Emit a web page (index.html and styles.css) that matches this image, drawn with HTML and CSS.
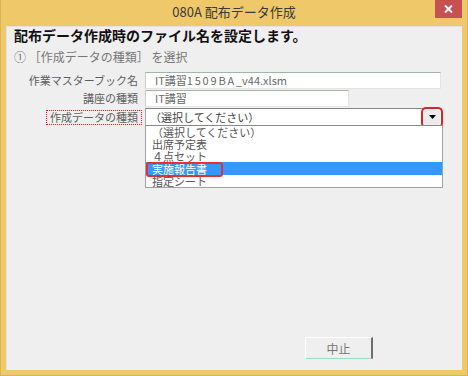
FILE: index.html
```html
<!DOCTYPE html>
<html lang="ja">
<head>
    <meta charset="UTF-8">
    <meta name="viewport" content="width=device-width, initial-scale=1.0">
    <title>080A 配布データ作成</title>
    <link rel="stylesheet" href="styles.css">
</head>
<body>
    <div class="window">
        <div class="titlebar">
            <span class="title">080A 配布データ作成</span>
            <button class="close" aria-label="閉じる">
                <svg width="9" height="8" viewBox="0 0 9 8"><path d="M1 0.5L8 7.5M8 0.5L1 7.5" stroke="#fff" stroke-width="2"/></svg>
            </button>
        </div>
        <div class="client">
            <h1 class="heading">配布データ作成時のファイル名を設定します。</h1>
            <p class="step">① ［作成データの種類］ を選択</p>
            <div class="form">
                <label class="label">作業マスターブック名</label>
                <div class="field field-wide">IT講習<span class="wide">1509BA</span>_v44.xlsm</div>

                <label class="label">講座の種類</label>
                <div class="field field-short">IT講習</div>

                <label class="label"><span class="marked">作成データの種類</span></label>
                <div class="combo">
                    <span class="combo-text">（選択してください）</span>
                    <span class="combo-btn">
                        <svg width="7" height="4" viewBox="0 0 7 4"><polygon points="0,0 7,0 3.5,4" fill="#000"/></svg>
                    </span>
                    <ul class="list">
                        <li>（選択してください）</li>
                        <li>出席予定表</li>
                        <li>４点セット</li>
                        <li class="selected"><span class="pick">実施報告書</span></li>
                        <li>指定シート</li>
                    </ul>
                </div>
            </div>
            <div class="footer">
                <button class="btn">中止</button>
            </div>
        </div>
    </div>
</body>
</html>
```

FILE: styles.css
```css
* {
    margin: 0;
    padding: 0;
    box-sizing: border-box;
}

body {
    width: 468px;
    height: 376px;
    font-family: "Noto Sans CJK JP", "Noto Sans", sans-serif;
    color: #333;
    overflow: hidden;
}

.window {
    width: 468px;
    height: 376px;
    background: #efc86a;
    border: 1px solid #dcb458;
    border-top: none;
    padding: 0 5px 5px 5px;
    display: flex;
    flex-direction: column;
}

.titlebar {
    height: 26px;
    position: relative;
    display: flex;
    justify-content: center;
    align-items: center;
    padding-bottom: 2px;
}

.title {
    font-size: 13px;
    line-height: 16px;
    color: #3a3a3a;
}

.close {
    position: absolute;
    top: 0;
    right: 0;
    width: 27px;
    height: 18px;
    background: #c75050;
    border: none;
    display: flex;
    justify-content: center;
    align-items: center;
}

.client {
    flex: 1;
    background: #efefef;
    border-left: 1px solid #e2e2e2;
    border-top: 1px solid #e2e2e2;
    display: flex;
    flex-direction: column;
}

.heading {
    font-size: 14px;
    font-weight: bold;
    line-height: 16px;
    color: #111;
    padding-left: 7px;
}

.step {
    font-size: 12px;
    line-height: 16px;
    color: #777;
    padding-left: 7px;
    margin-top: 6px;
}

.form {
    display: grid;
    grid-template-columns: 131px 297px;
    grid-template-rows: 17px 17px 18px;
    column-gap: 7px;
    row-gap: 1px;
    margin-top: 7px;
}

.label {
    justify-self: end;
    align-self: center;
    font-size: 11px;
    line-height: 13px;
    color: #5e5e5e;
}

.marked {
    display: inline-block;
    border: 1px dotted #e02020;
    padding: 0 3px;
    margin-right: -4px;
}

.field {
    background: #fff;
    border-top: 1px solid #9fb7a6;
    border-left: 1px solid #c9c9c9;
    border-right: 1px solid #e4e4e4;
    border-bottom: 1px solid #e4e4e4;
    font-size: 11px;
    line-height: 15px;
    color: #6a6a6a;
    padding-left: 9px;
    white-space: nowrap;
}

.field-wide {
    width: 296px;
}

.field-short {
    width: 204px;
}

.wide {
    letter-spacing: 1.8px;
}

.combo {
    position: relative;
    display: flex;
    align-items: center;
    background: #fff;
    border-top: 1px solid #7c8c8a;
    border-left: 1px solid #a9a9a9;
    border-right: 1px solid #e4e4e4;
    border-bottom: 1px solid #e4e4e4;
}

.combo-text {
    flex: 1;
    font-size: 11px;
    line-height: 15px;
    color: #444;
    padding-left: 4px;
}

.combo-btn {
    width: 16px;
    height: 15px;
    margin-right: 1px;
    background: #ececec;
    display: flex;
    justify-content: center;
    align-items: center;
    border-radius: 2px;
    outline: 2px solid #e32020;
    outline-offset: 1px;
}

.list {
    position: absolute;
    top: 100%;
    left: -1px;
    width: 298px;
    list-style: none;
    background: #fff;
    border: 1px solid #a2a2a2;
    border-top-color: #8a8a8a;
}

.list li {
    height: 12px;
    font-size: 11px;
    line-height: 12px;
    color: #555;
    padding-left: 6px;
    white-space: nowrap;
}

.list li.selected {
    background: #3399ff;
    color: #fff;
    padding-left: 0;
    height: 13px;
}

.pick {
    display: inline-block;
    border: 2px solid #e63030;
    border-radius: 3px;
    padding: 0 14px 0 4px;
    line-height: 11px;
}

.footer {
    margin-top: auto;
    display: flex;
    justify-content: flex-end;
    padding: 0 89px 11px 0;
}

.btn {
    width: 68px;
    height: 22px;
    background: #efefef;
    border-top: 1px solid #fff;
    border-left: 1px solid #fff;
    border-right: 2px solid #6e6e6e;
    border-bottom: 1px solid #9ed8d0;
    font-family: "Noto Sans CJK JP", "Noto Sans", sans-serif;
    font-size: 12px;
    color: #777;
}
```
